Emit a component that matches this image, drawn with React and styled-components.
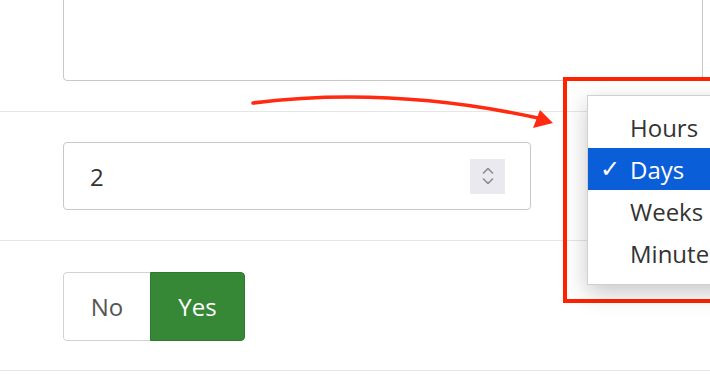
import React from "react";
import styled, { createGlobalStyle } from "styled-components";

const Global = createGlobalStyle`
  html, body { margin: 0; padding: 0; background: #fff; }
  body { font-family: "Open Sans", "Noto Sans", sans-serif; overflow: hidden; }
  * { box-sizing: border-box; }
`;

const Page = styled.div`
  position: relative;
  width: 710px;
  height: 380px;
  overflow: hidden;
`;

const Form = styled.div`
  display: flex;
  flex-direction: column;
  margin-top: -40px;
`;

const Row = styled.div`
  display: flex;
  padding: ${(p) => p.$pad || "30px 0 30px 63px"};
  border-bottom: 1px solid #e6e6e6;
`;

const TextArea = styled.div`
  width: 640px;
  height: 121px;
  border: 1px solid #c9c9c9;
  border-radius: 4px;
  background: #fff;
`;

const NumberField = styled.div`
  width: 468px;
  height: 68px;
  border: 1px solid #c9c9c9;
  border-radius: 4px;
  display: flex;
  align-items: center;
  justify-content: space-between;
  padding: 0 25px 0 26px;
  font-size: 24px;
  color: #333;
`;

const Spinner = styled.div`
  width: 35px;
  height: 35px;
  background: #e9e9ef;
  display: flex;
  align-items: center;
  justify-content: center;
`;

const Toggle = styled.div`
  display: flex;
  height: 69px;
  border-radius: 4px;
  overflow: hidden;
`;

const ToggleBtn = styled.div`
  width: ${(p) => p.$w}px;
  display: flex;
  align-items: center;
  justify-content: center;
  font-size: 24px;
  color: ${(p) => (p.$active ? "#fff" : "#555")};
  background: ${(p) => (p.$active ? "#368836" : "#fff")};
  border: 1px solid ${(p) => (p.$active ? "#2f7a2f" : "#d2d2d2")};
  border-right: ${(p) => (p.$active ? "1px solid #2f7a2f" : "none")};
  border-radius: ${(p) => (p.$active ? "0 4px 4px 0" : "4px 0 0 4px")};
`;

const Highlight = styled.div`
  position: absolute;
  left: 563px;
  top: 77px;
  width: 170px;
  height: 226px;
  border: 4px solid #ff2200;
`;

const Menu = styled.div`
  position: absolute;
  left: 587px;
  top: 95px;
  width: 160px;
  padding: 10px 0;
  background: #fff;
  border: 1px solid #d0d0d0;
  box-shadow: 0 8px 22px rgba(0, 0, 0, 0.22);
`;

const Item = styled.div`
  height: 42px;
  display: flex;
  align-items: center;
  font-size: 24px;
  color: ${(p) => (p.$selected ? "#fff" : "#333")};
  background: ${(p) => (p.$selected ? "#0a5ed8" : "transparent")};
`;

const Check = styled.span`
  width: 42px;
  padding-left: 12px;
  font-family: "DejaVu Sans", sans-serif;
  font-size: 24px;
  font-weight: bold;
`;

const Arrow = styled.svg`
  position: absolute;
  left: 0;
  top: 0;
  pointer-events: none;
`;

const items = ["Hours", "Days", "Weeks", "Minutes"];

export default function App() {
  return (
    <Page>
      <Global />
      <Form>
        <Row $pad="0 0 30px 63px">
          <TextArea />
        </Row>
        <Row $pad="30px 0 30px 63px">
          <NumberField>
            <span>2</span>
            <Spinner>
              <svg width="16" height="24" viewBox="0 0 16 24" fill="none" stroke="#8a8a92" strokeWidth="1.6" strokeLinecap="round" strokeLinejoin="round">
                <path d="M3.5 9l4.5-4.5 4.5 4.5" />
                <path d="M3.5 15l4.5 4.5 4.5-4.5" />
              </svg>
            </Spinner>
          </NumberField>
        </Row>
        <Row $pad="31px 0 29px 63px">
          <Toggle>
            <ToggleBtn $w={87}>No</ToggleBtn>
            <ToggleBtn $w={95} $active>Yes</ToggleBtn>
          </Toggle>
        </Row>
      </Form>
      <Arrow width="710" height="380" viewBox="0 0 710 380">
        <path d="M253 103 Q 390 86 538 118" fill="none" stroke="#ff2a10" strokeWidth="3.5" strokeLinecap="round" />
        <path d="M540 110 L553 123 L533 128 Z" fill="#ff2a10" />
      </Arrow>
      <Highlight />
      <Menu>
        {items.map((t) => (
          <Item key={t} $selected={t === "Days"}>
            <Check>{t === "Days" ? "✓" : ""}</Check>
            <span>{t}</span>
          </Item>
        ))}
      </Menu>
    </Page>
  );
}
